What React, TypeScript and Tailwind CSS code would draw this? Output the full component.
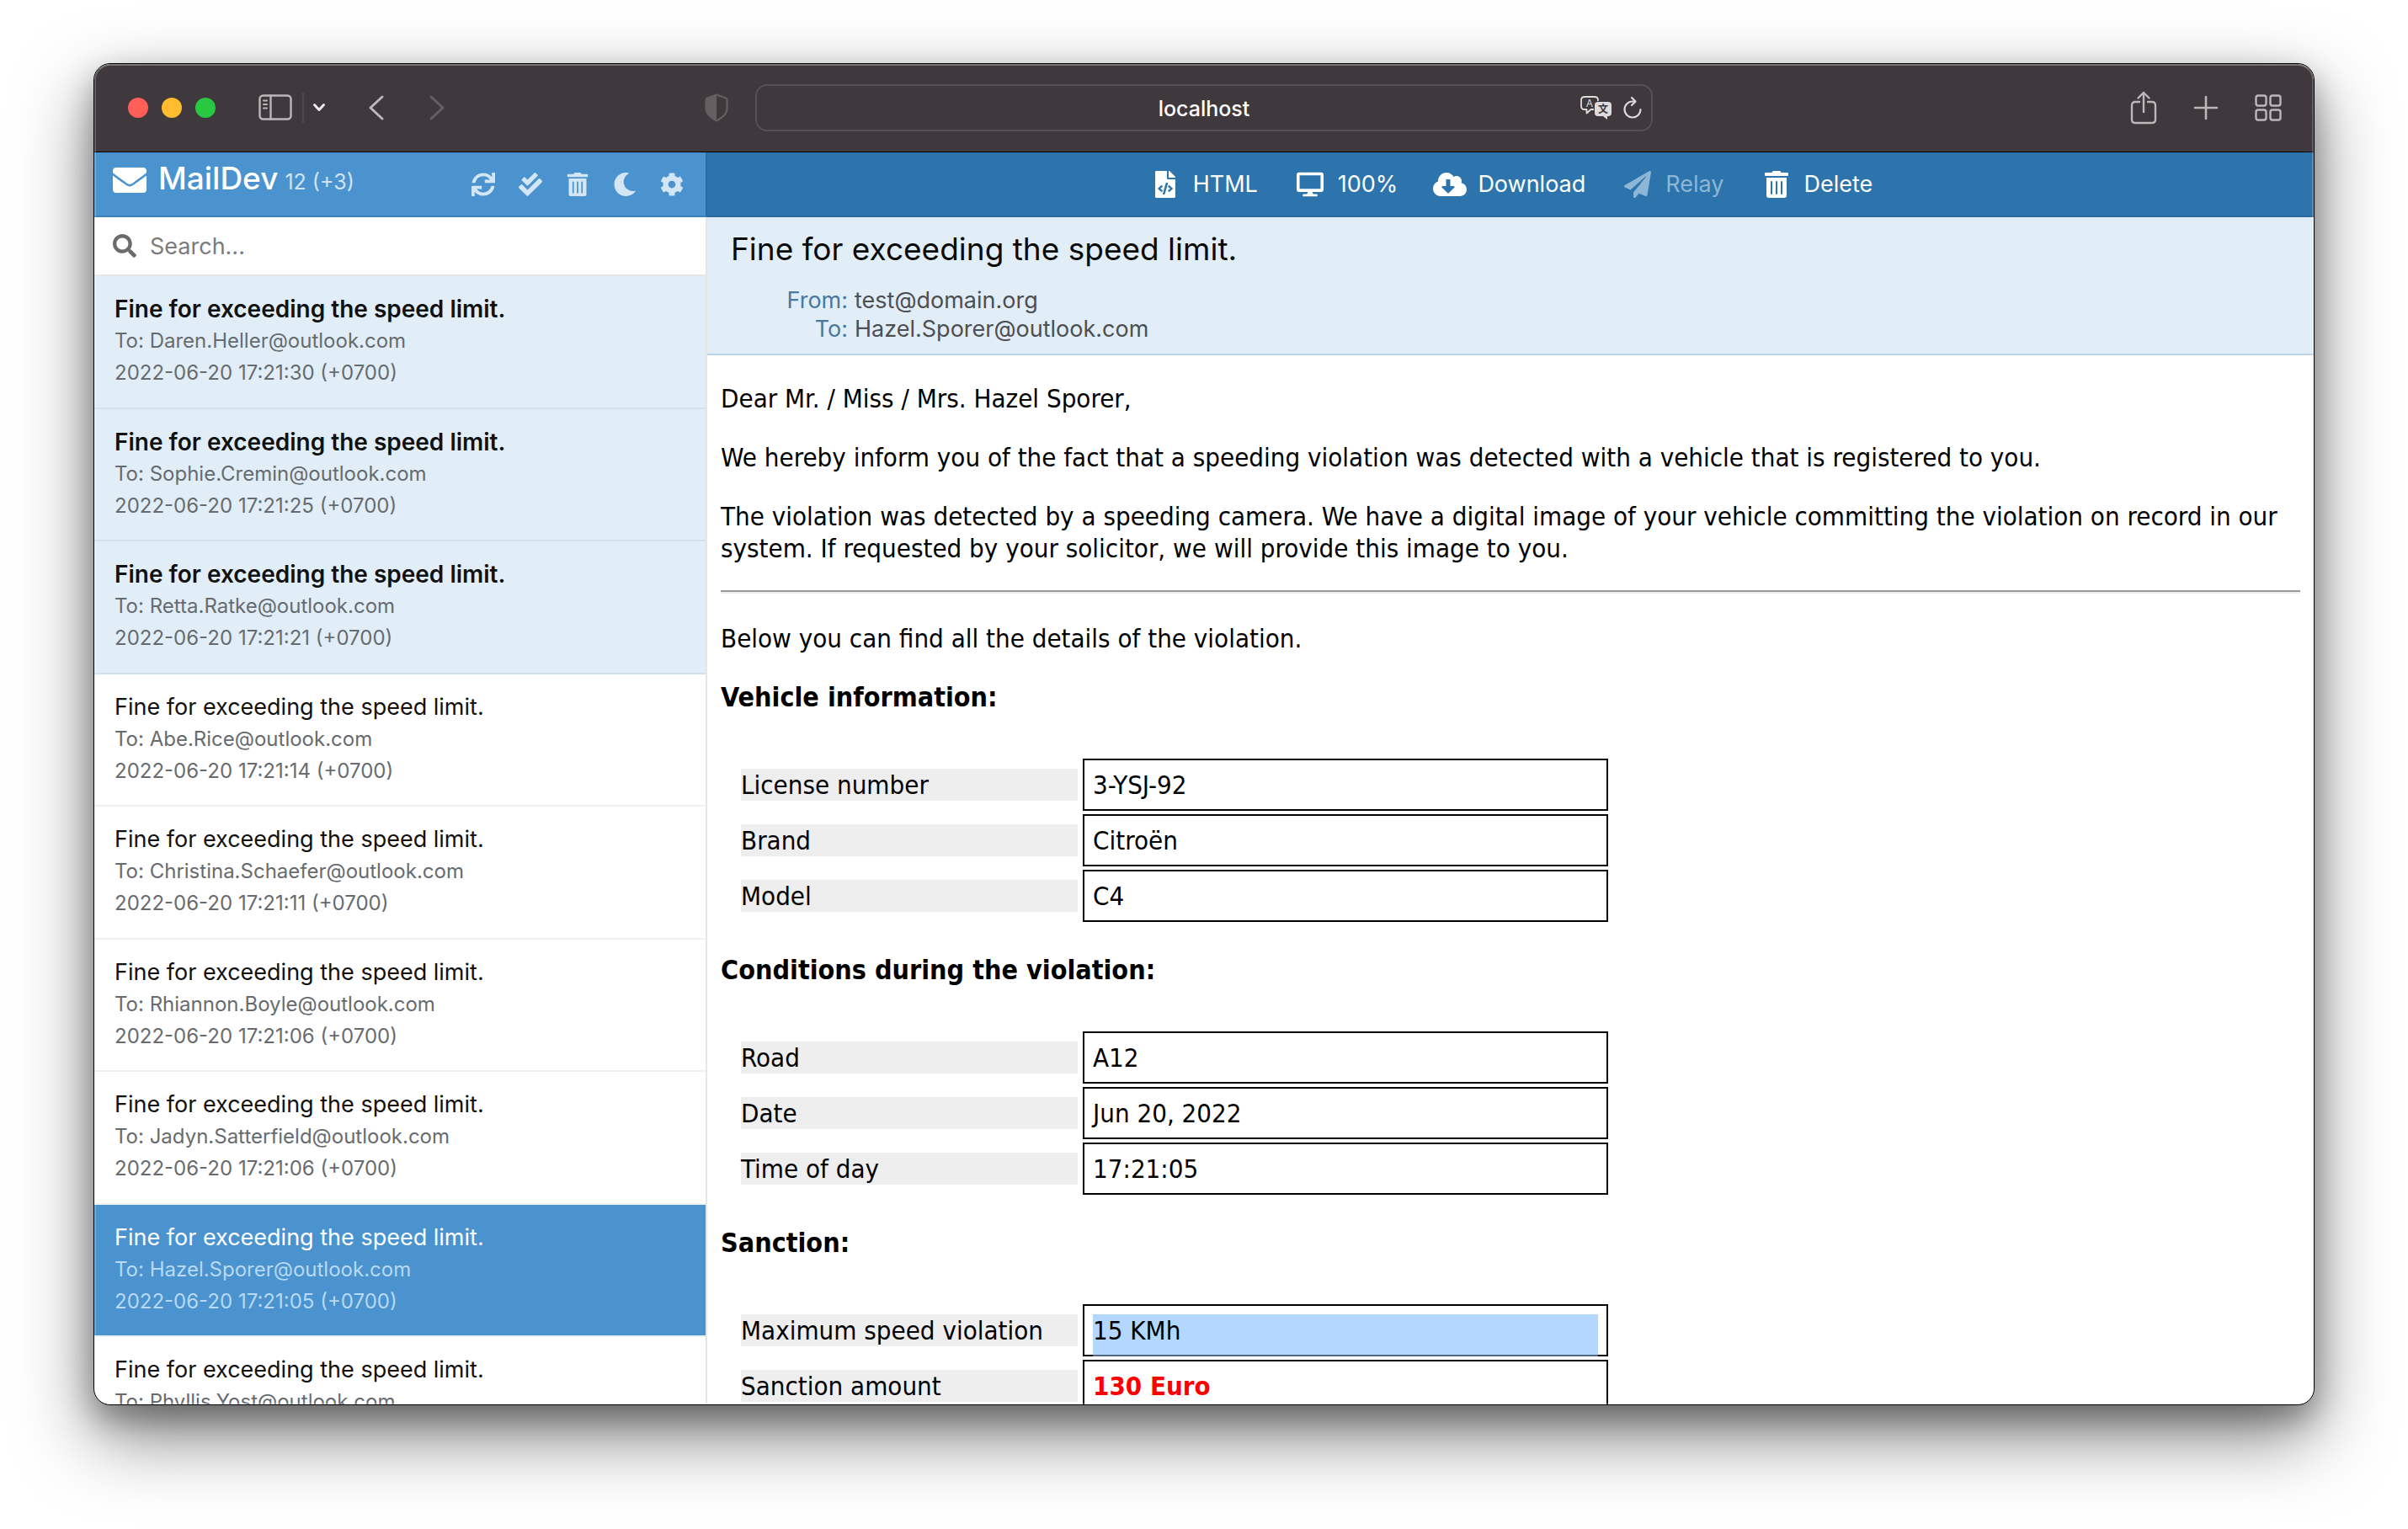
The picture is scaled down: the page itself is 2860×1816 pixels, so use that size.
import React from "react";
import type { ReactNode } from "react";
import {
  FaCheckDouble,
  FaCloudDownloadAlt,
  FaCog,
  FaDesktop,
  FaEnvelope,
  FaFileCode,
  FaMoon,
  FaPaperPlane,
  FaSearch,
  FaSync,
  FaTrashAlt,
} from "react-icons/fa";

type Mail = { to: string; time: string; unread?: boolean; selected?: boolean };

const subject = "Fine for exceeding the speed limit.";

const mails: Mail[] = [
  { to: "Daren.Heller@outlook.com", time: "17:21:30", unread: true },
  { to: "Sophie.Cremin@outlook.com", time: "17:21:25", unread: true },
  { to: "Retta.Ratke@outlook.com", time: "17:21:21", unread: true },
  { to: "Abe.Rice@outlook.com", time: "17:21:14" },
  { to: "Christina.Schaefer@outlook.com", time: "17:21:11" },
  { to: "Rhiannon.Boyle@outlook.com", time: "17:21:06" },
  { to: "Jadyn.Satterfield@outlook.com", time: "17:21:06" },
  { to: "Hazel.Sporer@outlook.com", time: "17:21:05", selected: true },
  { to: "Phyllis.Yost@outlook.com", time: "" },
];

type Row = { label: string; value: string; tone?: "selected" | "alert" };

const sections: { title: string; rows: Row[] }[] = [
  {
    title: "Vehicle information:",
    rows: [
      { label: "License number", value: "3-YSJ-92" },
      { label: "Brand", value: "Citroën" },
      { label: "Model", value: "C4" },
    ],
  },
  {
    title: "Conditions during the violation:",
    rows: [
      { label: "Road", value: "A12" },
      { label: "Date", value: "Jun 20, 2022" },
      { label: "Time of day", value: "17:21:05" },
    ],
  },
  {
    title: "Sanction:",
    rows: [
      { label: "Maximum speed violation", value: "15 KMh", tone: "selected" },
      { label: "Sanction amount", value: "130 Euro", tone: "alert" },
    ],
  },
];

function TitleBar() {
  return (
    <header className="grid h-[105px] shrink-0 grid-cols-[1fr_minmax(0,1066px)_1fr] items-center border-b border-black bg-[#3f383c] text-[#bdb7ba]">
      <div className="flex items-center pr-8 pl-10">
        <div className="flex gap-4">
          <button aria-label="Close" className="size-6 rounded-full bg-[#ff5f57]" />
          <button aria-label="Minimize" className="size-6 rounded-full bg-[#febc2e]" />
          <button aria-label="Zoom" className="size-6 rounded-full bg-[#28c840]" />
        </div>
        <button aria-label="Sidebar" className="ml-[51px]">
          <svg className="h-8 w-10" viewBox="0 0 40 32" fill="none" stroke="currentColor" strokeWidth="2.4" strokeLinecap="round">
            <rect x="1.5" y="1.5" width="37" height="28" rx="4" />
            <path d="M14.5 1.5v28" />
            <path d="M6 7.5h4M6 12h4M6 16.500h4" strokeWidth="2" />
          </svg>
        </button>
        <span className="ml-3 h-9 w-0.5 bg-[#4e474b]" />
        <button aria-label="Tab groups" className="ml-2.5">
          <svg className="h-4 w-4" viewBox="0 0 16 16" fill="none" stroke="#eeeaec" strokeWidth="3" strokeLinecap="round" strokeLinejoin="round">
            <path d="M2.500 4.500L8 10.500L13.500 4.500" />
          </svg>
        </button>
        <button aria-label="Back" className="ml-[50px]">
          <svg className="h-8 w-5" viewBox="0 0 20 32" fill="none" stroke="currentColor" strokeWidth="3" strokeLinecap="round" strokeLinejoin="round">
            <path d="M17 3L3 16L17 29" />
          </svg>
        </button>
        <button aria-label="Forward" className="ml-[52px] text-[#655f62]">
          <svg className="h-8 w-5" viewBox="0 0 20 32" fill="none" stroke="currentColor" strokeWidth="3" strokeLinecap="round" strokeLinejoin="round">
            <path d="M3 3L17 16L3 29" />
          </svg>
        </button>
        <button aria-label="Privacy report" className="ml-auto text-[#655f62]">
          <svg className="h-[34px] w-7" viewBox="0 0 28 34" fill="none">
            <path d="M14 1.500L25 5.500Q26.500 6 26.500 8V18Q26.500 26 14 32.500Q1.500 26 1.500 18V8Q1.500 6 3 5.500Z" stroke="currentColor" strokeWidth="2.200" strokeLinejoin="round" />
            <path d="M14 1.500V32.500Q1.500 26 1.500 18V8Q1.500 6 3 5.500Z" fill="currentColor" />
          </svg>
        </button>
      </div>

      <div className="grid h-14 grid-cols-[1fr_auto_1fr] items-center rounded-[14px] border-2 border-[#565054] px-2.5 text-white">
        <span />
        <span className="pt-0.5 text-[25px] leading-8 font-medium">localhost</span>
        <div className="flex items-center justify-end gap-3 text-[#dedbdc]">
          <button aria-label="Translate">
            <svg className="h-7 w-[38px]" viewBox="0 0 38 28" fill="none">
              <path d="M16 16h-3.500L7.500 20.500V16H5Q1 16 1 12V5Q1 1 5 1H17Q21 1 21 5V6" stroke="currentColor" strokeWidth="1.800" strokeLinejoin="round" />
              <text x="11" y="13" textAnchor="middle" className="fill-current font-[Inter] text-[12px]">A</text>
              <path d="M21 7H33Q37 7 37 11V20Q37 24 33 24H32V28L27 24H21Q17 24 17 20V11Q17 7 21 7Z" fill="currentColor" />
              <text x="27" y="20" textAnchor="middle" className="fill-[#3f383c] text-[12px] font-bold [font-family:'Noto_Sans_CJK_SC',sans-serif]">文</text>
            </svg>
          </button>
          <button aria-label="Reload">
            <svg className="h-7 w-6" viewBox="0 0 24 28" fill="none" stroke="currentColor" strokeWidth="2.200" strokeLinecap="round" strokeLinejoin="round">
              <path d="M21.500 16A9.500 9.500 0 1 1 12 6.500H15" />
              <path d="M11 2L15.500 6.500L11 11" />
            </svg>
          </button>
        </div>
      </div>

      <div className="flex items-center justify-end pr-[38px]">
        <button aria-label="Share">
          <svg className="h-10 w-8" viewBox="0 0 32 40" fill="none" stroke="currentColor" strokeWidth="2.400" strokeLinecap="round" strokeLinejoin="round">
            <path d="M11 13H6Q2 13 2 17V34Q2 38 6 38H26Q30 38 30 34V17Q30 13 26 13H21" />
            <path d="M16 25V2M9.500 8.500L16 2L22.500 8.500" />
          </svg>
        </button>
        <button aria-label="New tab" className="ml-[42px]">
          <svg className="size-8" viewBox="0 0 32 32" fill="none" stroke="currentColor" strokeWidth="2.600" strokeLinecap="round">
            <path d="M16 3V29M3 16H29" />
          </svg>
        </button>
        <button aria-label="Tab overview" className="ml-[42px]">
          <svg className="size-8" viewBox="0 0 32 32" fill="none" stroke="currentColor" strokeWidth="2.400">
            <rect x="1.500" y="1.500" width="12" height="12" rx="2.500" />
            <rect x="18.500" y="1.500" width="12" height="12" rx="2.500" />
            <rect x="1.500" y="18.500" width="12" height="12" rx="2.500" />
            <rect x="18.500" y="18.500" width="12" height="12" rx="2.500" />
          </svg>
        </button>
      </div>
    </header>
  );
}

function SidebarAction({ label, children }: { label: string; children: ReactNode }) {
  return (
    <button aria-label={label} className="flex size-7 items-center justify-center text-[28px]">
      {children}
    </button>
  );
}

function MailItem({ mail }: { mail: Mail }) {
  const tone = mail.selected
    ? "border-[#e6f0f7] bg-[#4a93cf] text-white"
    : mail.unread
      ? "border-[#d0e2ee] bg-[#e1eef7] text-[#111]"
      : "border-[#eef2f5] text-[#111]";
  const title = mail.unread ? "text-[28px] font-semibold" : "text-[27px]";
  const meta = mail.selected ? "text-[#b7d9f3]" : "text-[#666b70]";
  return (
    <li className="group">
      <a href="#mail" className={`block border-b-2 pt-5 pr-6 pb-[22px] pl-6 leading-[38px] group-even:pb-[21px] ${tone}`}>
        <span className={`block truncate ${title}`}>{subject}</span>
        <span className={`block truncate text-2xl leading-[38px] ${meta}`}>To: {mail.to}</span>
        {mail.time && <span className={`block truncate text-2xl leading-[38px] ${meta}`}>2022-06-20 {mail.time} (+0700)</span>}
      </a>
    </li>
  );
}

function Sidebar() {
  return (
    <aside className="flex w-[728px] shrink-0 flex-col">
      <div className="flex h-[77px] shrink-0 items-center border-r-2 border-b-2 border-r-[#2a6ea3] border-b-[#3a80bb] bg-[#4a93cf] pr-[26px] pl-[22px] text-[#d2e6f5]">
        <h1 className="flex items-baseline pb-2.5 text-[37px] leading-[44px] font-medium text-white">
          <FaEnvelope className="mr-3.5 size-10 self-center" />
          MailDev
          <span className="ml-2 text-[25px] font-normal text-[#cfe3f3]">12 (+3)</span>
        </h1>
        <div className="ml-auto flex gap-7">
          <SidebarAction label="Refresh"><FaSync /></SidebarAction>
          <SidebarAction label="Mark all read"><FaCheckDouble /></SidebarAction>
          <SidebarAction label="Delete all"><FaTrashAlt /></SidebarAction>
          <SidebarAction label="Dark mode"><FaMoon /></SidebarAction>
          <SidebarAction label="Settings"><FaCog /></SidebarAction>
        </div>
      </div>
      <div className="flex min-h-0 flex-1 flex-col overflow-hidden border-r-2 border-[#e6e6e6]">
        <label className="flex h-[70px] shrink-0 items-center gap-4 border-b-2 border-[#e6e6e6] px-[22px] text-[#6b6b6b]">
          <FaSearch className="size-7 shrink-0" />
          <input type="search" aria-label="Search" placeholder="Search..." className="w-full bg-transparent pt-0.5 text-[27px] leading-8 outline-none placeholder:text-[#7b7b7b]" />
        </label>
        <ul>
          {mails.map((mail) => (
            <MailItem key={mail.to} mail={mail} />
          ))}
        </ul>
      </div>
    </aside>
  );
}

function ToolbarButton({ icon, label, disabled }: { icon: ReactNode; label: string; disabled?: boolean }) {
  return (
    <button disabled={disabled} className="flex items-center gap-[13px] disabled:text-[#8db6d6]">
      <span className="flex w-10 justify-center text-[32px]">{icon}</span>
      {label}
    </button>
  );
}

function DetailTable({ rows }: { rows: Row[] }) {
  return (
    <table className="mt-[50px] mb-[34px] ml-5 border-separate border-spacing-1">
      <tbody>
        {rows.map((row) => (
          <tr key={row.label}>
            <th scope="row" className="w-[402px] pr-0.5 text-left font-normal">
              <div className="bg-[#eee]">{row.label}</div>
            </th>
            <td className="w-[624px] border-2 border-black p-2.5">
              {row.tone === "selected" ? (
                <div className="relative">
                  <span className="absolute inset-x-0 top-0 h-[50px] border-b-2 border-[#52687e] bg-[#b3d7ff]" />
                  <span className="relative">{row.value}</span>
                </div>
              ) : (
                <span className={row.tone === "alert" ? "font-bold text-[#f00]" : ""}>{row.value}</span>
              )}
            </td>
          </tr>
        ))}
      </tbody>
    </table>
  );
}

function MailPane() {
  return (
    <main className="flex min-w-0 flex-1 flex-col">
      <nav className="flex h-[77px] shrink-0 items-center justify-center gap-[42px] border-b-2 border-[#2a699a] bg-[#2c74ab] text-[27px] leading-8 text-white">
        <ToolbarButton icon={<FaFileCode />} label="HTML" />
        <ToolbarButton icon={<FaDesktop />} label="100%" />
        <ToolbarButton icon={<FaCloudDownloadAlt className="h-8 w-10" />} label="Download" />
        <ToolbarButton icon={<FaPaperPlane />} label="Relay" disabled />
        <ToolbarButton icon={<FaTrashAlt />} label="Delete" />
      </nav>
      <section className="shrink-0 border-b-2 border-[#bdd5e9] bg-[#e1eef7] px-7 pt-4 pb-3">
        <h2 className="text-[37px] leading-[44px] text-[#0a0a0a]">{subject}</h2>
        <dl className="mt-[22px] grid grid-cols-[139px_1fr] gap-x-2 text-[27px] leading-[34px] text-[#4d4f52]">
          <dt className="text-right text-[#4a789f]">From:</dt>
          <dd>test@domain.org</dd>
          <dt className="text-right text-[#4a789f]">To:</dt>
          <dd>Hazel.Sporer@outlook.com</dd>
        </dl>
      </section>
      <article className="min-h-0 flex-1 overflow-hidden px-4 pt-8 text-[31px] leading-[38px] text-black [font-family:'DejaVu_Sans_Condensed','DejaVu_Sans',sans-serif]">
        <div className="flex flex-col gap-8">
          <p>Dear Mr. / Miss / Mrs. Hazel Sporer,</p>
          <p>We hereby inform you of the fact that a speeding violation was detected with a vehicle that is registered to you.</p>
          <p>
            The violation was detected by a speeding camera. We have a digital image of your vehicle committing the violation on record in our
            system. If requested by your solicitor, we will provide this image to you.
          </p>
        </div>
        <hr className="mt-[31px] mb-[34px] h-1 border-t-2 border-b-2 border-t-[#9a9a9a] border-b-[#eee]" />
        <p className="mb-8">Below you can find all the details of the violation.</p>
        {sections.map((section) => (
          <section key={section.title}>
            <h3 className="text-[32px] leading-[38px] font-bold">{section.title}</h3>
            <DetailTable rows={section.rows} />
          </section>
        ))}
      </article>
    </main>
  );
}

export default function App() {
  return (
    <div className="flex h-screen bg-white px-[111px] pt-[75px] pb-[147px] font-[Inter,sans-serif]">
      <div className="relative flex min-w-0 flex-1 flex-col overflow-hidden rounded-[20px] border border-black bg-white shadow-[0_36px_88px_rgba(0,0,0,0.5),0_16px_36px_rgba(0,0,0,0.3)]">
        <TitleBar />
        <div className="flex min-h-0 flex-1">
          <Sidebar />
          <MailPane />
        </div>
        <div className="pointer-events-none absolute inset-0 rounded-[19px] border-2 border-white/20 border-t-white/30" />
      </div>
    </div>
  );
}
